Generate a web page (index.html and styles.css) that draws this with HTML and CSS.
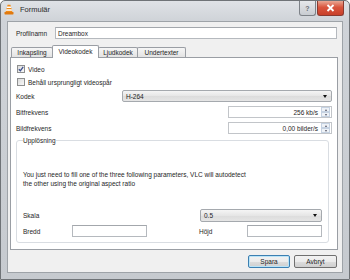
FILE: index.html
```html
<!DOCTYPE html>
<html>
<head>
<meta charset="utf-8">
<link rel="stylesheet" href="styles.css">
</head>
<body>
<div class="window">
  <div class="titlebar">
    <svg class="app-icon" width="10" height="11" viewBox="0 0 10 11">
      <path d="M3.6 0.8 L6.4 0.8 L8.4 8 L1.6 8 Z" fill="#f08a16"/>
      <path d="M3.1 2.6 L6.9 2.6 L7.3 4 L2.7 4 Z" fill="#fff"/>
      <path d="M2.3 5.3 L7.7 5.3 L8.1 6.7 L1.9 6.7 Z" fill="#fff"/>
      <rect x="0.5" y="8" width="9" height="2.4" rx="0.6" fill="#e07a10"/>
    </svg>
    <span class="title">Formulär</span>
    <div class="caption-btns">
      <div class="cbtn help">?</div>
      <div class="cbtn close">
        <svg width="9" height="8" viewBox="0 0 9 8"><path d="M1.5 1 L7.5 7 M7.5 1 L1.5 7" stroke="#fff" stroke-width="1.8"/></svg>
      </div>
    </div>
  </div>
  <div class="client">
    <div class="profile-row">
      <span class="label">Profilnamn</span>
      <div class="textbox profile-input">Dreambox</div>
    </div>
    <div class="tabs">
      <div class="tab t1">Inkapsling</div>
      <div class="tab t2 active">Videokodek</div>
      <div class="tab t3">Ljudkodek</div>
      <div class="tab t4">Undertexter</div>
    </div>
    <div class="panel">
      <div class="row check-row r-video">
        <span class="checkbox checked">
          <svg width="6" height="6" viewBox="0 0 6 6"><path d="M0.8 3.2 L2.4 4.8 L5.2 0.9" fill="none" stroke="#3c4f8e" stroke-width="1.3"/></svg>
        </span>
        <span>Video</span>
      </div>
      <div class="row check-row r-keep">
        <span class="checkbox"></span>
        <span>Behåll ursprungligt videospår</span>
      </div>
      <div class="row r-kodek">
        <span class="label">Kodek</span>
        <div class="combo kodek-combo"><span>H-264</span><span class="arrow"></span></div>
      </div>
      <div class="row r-bit">
        <span class="label">Bitfrekvens</span>
        <div class="spin"><span class="spin-val">256 kb/s</span><span class="spin-btns"><i class="up"></i><i class="down"></i></span></div>
      </div>
      <div class="row r-bild">
        <span class="label">Bildfrekvens</span>
        <div class="spin"><span class="spin-val">0,00 bilder/s</span><span class="spin-btns"><i class="up"></i><i class="down"></i></span></div>
      </div>
      <fieldset class="group">
        <legend>Upplösning</legend>
        <p class="info">You just need to fill one of the three following parameters, VLC will autodetect<br>the other using the original aspect ratio</p>
        <div class="row r-skala">
          <span class="label">Skala</span>
          <div class="combo skala-combo"><span>0.5</span><span class="arrow"></span></div>
        </div>
        <div class="size-row">
          <span class="label">Bredd</span>
          <div class="textbox"></div>
          <span></span>
          <span class="label">Höjd</span>
          <div class="textbox"></div>
        </div>
      </fieldset>
    </div>
    <div class="buttons">
      <div class="btn default">Spara</div>
      <div class="btn">Avbryt</div>
    </div>
  </div>
</div>
</body>
</html>
```

FILE: styles.css
```css
* { box-sizing: border-box; }
html, body {
  margin: 0;
  padding: 0;
  width: 350px;
  height: 280px;
  overflow: hidden;
  background: #ffffff;
}
body {
  font-family: "Liberation Sans", Arial, sans-serif;
  font-size: 6.5px;
  color: #1e1e1e;
}
.window {
  width: 350px;
  height: 280px;
  display: flex;
  flex-direction: column;
  background: linear-gradient(to bottom, #dfe2e6 0px, #cfd3d8 20px, #c6cacf 100%);
  border: 1px solid #6f7377;
  border-radius: 5px 5px 0 0;
}
.titlebar {
  height: 20px;
  display: flex;
  align-items: flex-start;
  padding-left: 3px;
}
.app-icon {
  margin-top: 3px;
}
.title {
  margin-left: 6px;
  margin-top: 4px;
  font-size: 7.5px;
  color: #2a2a2a;
}
.caption-btns {
  margin-left: auto;
  margin-right: 5px;
  display: flex;
  gap: 1px;
}
.cbtn {
  height: 15px;
  display: flex;
  align-items: center;
  justify-content: center;
  border: 1px solid #7d8288;
  border-top: none;
  border-radius: 0 0 3px 3px;
}
.help {
  width: 17px;
  background: linear-gradient(to bottom, #e6e8eb, #c8ccd1);
  color: #6a6f75;
  font-size: 7px;
  font-weight: bold;
}
.close {
  width: 27px;
  background: linear-gradient(to bottom, #e9a793 0%, #d9553d 45%, #c8402a 100%);
  border-color: #8a3a30;
}
.client {
  flex: 1;
  margin: 0 6px 6px 6px;
  background: #f0f0f0;
  border: 1px solid #9ea3a8;
  padding: 5px 4px 0 2px;
  display: flex;
  flex-direction: column;
}
.label { white-space: nowrap; }
.profile-row {
  display: flex;
  align-items: center;
  height: 12px;
  padding-left: 6px;
}
.profile-row .label { width: 39px; }
.textbox {
  height: 12px;
  background: #fff;
  border: 1px solid #b5b9be;
  border-top-color: #a3a7ac;
  display: flex;
  align-items: center;
  padding-left: 2px;
}
.profile-input { width: 282px; }
.tabs {
  display: flex;
  align-items: flex-end;
  height: 12px;
  margin-top: 6px;
  padding-left: 1px;
  position: relative;
  z-index: 1;
}
.tab {
  height: 10px;
  display: flex;
  align-items: center;
  justify-content: center;
  border: 1px solid #9a9ea4;
  border-bottom: none;
  background: linear-gradient(to bottom, #f6f6f6, #e3e3e3);
  margin-right: -1px;
  border-radius: 2px 2px 0 0;
}
.t1 { width: 42px; }
.t2 { width: 47px; }
.t3 { width: 40px; }
.t4 { width: 49px; }
.tab.active {
  height: 13px;
  background: #fff;
  margin-bottom: -1px;
  padding-bottom: 1px;
}
.panel {
  height: 193px;
  background: #fff;
  border: 1px solid #9a9ea4;
  padding: 0 5px 0 5px;
  display: flex;
  flex-direction: column;
}
.row {
  display: flex;
  align-items: center;
  justify-content: space-between;
  height: 12px;
}
.check-row {
  justify-content: flex-start;
  gap: 3px;
  padding-left: 1px;
}
.r-video { margin-top: 5px; }
.r-keep { margin-top: 1px; }
.r-kodek { margin-top: 2px; }
.r-bit, .r-bild { margin-top: 4px; }
.checkbox {
  width: 8px;
  height: 8px;
  border: 1px solid #8e8f8f;
  background: linear-gradient(135deg, #dcdcdc, #f8f8f8);
  display: flex;
  align-items: center;
  justify-content: center;
}
.combo {
  height: 12px;
  border: 1px solid #a5a9ae;
  border-radius: 2px;
  background: linear-gradient(to bottom, #f5f5f5, #e6e6e6 50%, #dcdcdc 51%, #e5e5e5);
  display: flex;
  align-items: center;
  justify-content: space-between;
  padding: 0 4px 0 3px;
}
.kodek-combo { width: 210px; }
.arrow {
  width: 0;
  height: 0;
  border-left: 2.5px solid transparent;
  border-right: 2.5px solid transparent;
  border-top: 3px solid #111;
}
.spin {
  width: 104px;
  height: 12px;
  border: 1px solid #c2c5c9;
  background: #fff;
  display: flex;
  align-items: center;
  justify-content: flex-end;
}
.spin-val { margin-right: 3px; }
.spin-btns {
  width: 9px;
  height: 10px;
  display: flex;
  flex-direction: column;
  gap: 0;
  margin-right: 1px;
}
.spin-btns i {
  flex: 1;
  border: 1px solid #c5d2e2;
  background: #eef2f7;
  display: flex;
  align-items: center;
  justify-content: center;
}
.spin-btns i::after {
  content: "";
  border-left: 1.5px solid transparent;
  border-right: 1.5px solid transparent;
}
.spin-btns .up::after { border-bottom: 2px solid #556; }
.spin-btns .down::after { border-top: 2px solid #556; }
.group {
  margin: 2px 3px 0 0;
  padding: 0 6px 5px 6px;
  border: 1px solid #d9dde2;
  border-radius: 3px;
  min-width: 0;
}
.group legend {
  padding: 0;
  margin-left: 0;
  line-height: 9px;
}
.info {
  margin: 25px 0 0 0;
  line-height: 9px;
}
.r-skala { margin-top: 21px; height: 13px; }
.skala-combo { width: 122px; height: 13px; }
.size-row {
  display: grid;
  grid-template-columns: 49px 75px 52px 48px 75px;
  align-items: center;
  height: 12px;
  margin-top: 3px;
}
.size-row .textbox { height: 12px; }
.buttons {
  display: flex;
  justify-content: flex-end;
  gap: 4px;
  margin-top: 5px;
  margin-right: 1px;
}
.btn {
  width: 43px;
  height: 13px;
  border: 1px solid #707070;
  border-radius: 2px;
  background: linear-gradient(to bottom, #f2f2f2, #ebebeb 50%, #dddddd 51%, #cfcfcf);
  display: flex;
  align-items: center;
  justify-content: center;
}
.btn.default {
  width: 42px;
  border-color: #3c7fb1;
  box-shadow: inset 0 0 0 1px #b9e4f8;
}
```
